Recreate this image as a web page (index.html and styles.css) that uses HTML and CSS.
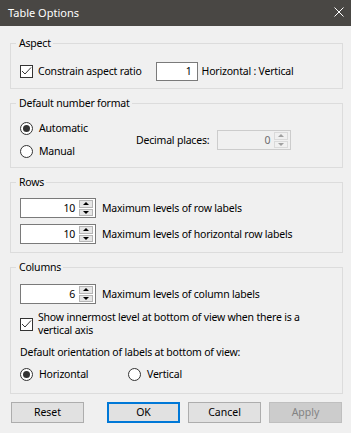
FILE: index.html
```html
<!DOCTYPE html>
<html lang="en">
<head>
    <meta charset="UTF-8">
    <title>Table Options</title>
    <link rel="stylesheet" href="styles.css">
</head>
<body>

<div class="titlebar">
    <span class="title">Table Options</span>
    <svg class="close" width="10" height="10" viewBox="0 0 10 10">
        <path d="M0.5 0.5 L9.5 9.5 M9.5 0.5 L0.5 9.5" stroke="#fff" stroke-width="1" fill="none"/>
    </svg>
</div>

<div class="content">

    <fieldset class="group group-aspect">
        <legend>Aspect</legend>
        <div class="row">
            <span class="check">
                <span class="box"><svg width="11" height="11" viewBox="0 0 11 11"><path d="M1 5 L4 8 L10 1.5" stroke="#333" fill="none"/></svg></span>
                Constrain aspect ratio
            </span>
            <span class="textbox ratio">1</span>
            <span class="after-ratio">Horizontal : Vertical</span>
        </div>
    </fieldset>

    <fieldset class="group group-format">
        <legend>Default number format</legend>
        <div class="format">
            <div class="radios">
                <span class="radio"><span class="dot on"></span>Automatic</span>
                <span class="radio"><span class="dot"></span>Manual</span>
            </div>
            <div class="decimals">
                <span>Decimal places:</span>
                <span class="spin disabled decimal">
                    <span class="spin-value">0</span>
                    <span class="spin-btns"><span class="up"></span><span class="down"></span></span>
                </span>
            </div>
        </div>
    </fieldset>

    <fieldset class="group group-rows">
        <legend>Rows</legend>
        <div class="row">
            <span class="spin">
                <span class="spin-value">10</span>
                <span class="spin-btns"><span class="up"></span><span class="down"></span></span>
            </span>
            <span class="spin-label">Maximum levels of row labels</span>
        </div>
        <div class="row next">
            <span class="spin">
                <span class="spin-value">10</span>
                <span class="spin-btns"><span class="up"></span><span class="down"></span></span>
            </span>
            <span class="spin-label">Maximum levels of horizontal row labels</span>
        </div>
    </fieldset>

    <fieldset class="group group-columns">
        <legend>Columns</legend>
        <div class="row">
            <span class="spin">
                <span class="spin-value">6</span>
                <span class="spin-btns"><span class="up"></span><span class="down"></span></span>
            </span>
            <span class="spin-label">Maximum levels of column labels</span>
        </div>
        <div class="check multi">
            <span class="box"><svg width="11" height="11" viewBox="0 0 11 11"><path d="M1 5 L4 8 L10 1.5" stroke="#333" fill="none"/></svg></span>
            <span>Show innermost level at bottom of view when there is a vertical axis</span>
        </div>
        <div class="orient-label">Default orientation of labels at bottom of view:</div>
        <div class="orient">
            <span class="radio horiz"><span class="dot on"></span>Horizontal</span>
            <span class="radio"><span class="dot"></span>Vertical</span>
        </div>
    </fieldset>

    <div class="buttons">
        <button type="button" class="reset">Reset</button>
        <button type="button" class="default">OK</button>
        <button type="button">Cancel</button>
        <button type="button" disabled>Apply</button>
    </div>

</div>

</body>
</html>
```

FILE: styles.css
```css
* {
    box-sizing: border-box;
}

html, body {
    margin: 0;
}

body {
    width: 351px;
    height: 433px;
    overflow: hidden;
    background: #f0f0f0;
    color: #000;
    font-family: "Noto Sans", "Liberation Sans", sans-serif;
    font-size: 10.5px;
    line-height: 13px;
    letter-spacing: -0.2px;
}

.titlebar {
    height: 26px;
    background: #494744;
    color: #fff;
    display: flex;
    align-items: center;
    justify-content: space-between;
    padding: 0 7px 2px 8px;
    letter-spacing: 0;
}

.title {
    font-size: 11px;
}

.content {
    padding: 11px 8px 0 10px;
}

.group {
    margin: 0 0 8px;
    padding: 0 8px 8px 9px;
    border: 1px solid #dcdcdc;
    min-width: 0;
}

.group legend {
    margin-left: -4px;
    padding: 0 2px 0 3px;
    line-height: 13px;
}

.row {
    display: flex;
    align-items: center;
}

/* checkbox and radio */
.check {
    display: flex;
    align-items: center;
    gap: 5px;
}

.box {
    width: 13px;
    height: 13px;
    border: 1px solid #333;
    background: #fff;
    flex: none;
    display: flex;
}

.radio {
    display: flex;
    align-items: center;
    gap: 6px;
}

.dot {
    width: 13px;
    height: 13px;
    border: 1px solid #333;
    border-radius: 50%;
    background: #fff;
    display: flex;
    align-items: center;
    justify-content: center;
    flex: none;
}

.dot.on::after {
    content: "";
    width: 7px;
    height: 7px;
    border-radius: 50%;
    background: #333;
}

/* text boxes */
.textbox {
    height: 19px;
    border: 1px solid #7a7a7a;
    background: #fff;
    text-align: right;
    padding-right: 5px;
    line-height: 17px;
}

.ratio {
    width: 42px;
    margin-left: 14px;
}

.after-ratio {
    margin-left: 4px;
}

.spin {
    width: 76px;
    height: 20px;
    border: 1px solid #7a7a7a;
    background: #fff;
    display: flex;
    padding: 1px 2px 1px 1px;
    flex: none;
}

.spin-value {
    flex: 1;
    text-align: right;
    padding-right: 4px;
    line-height: 16px;
}

.spin-btns {
    width: 14px;
    display: flex;
    flex-direction: column;
    gap: 1px;
}

.spin-btns span {
    flex: 1;
    background: #e6e6e6;
    border: 1px solid #b5b5b5;
    display: flex;
    align-items: center;
    justify-content: center;
}

.spin-btns .up::after {
    content: "";
    border-left: 3px solid transparent;
    border-right: 3px solid transparent;
    border-bottom: 3px solid #000;
}

.spin-btns .down::after {
    content: "";
    border-left: 3px solid transparent;
    border-right: 3px solid transparent;
    border-top: 3px solid #000;
}

.spin.disabled {
    background: #f0f0f0;
    border-color: #cccccc;
    color: #6d6d6d;
}

.spin.disabled .spin-btns span {
    background: #f0f0f0;
    border-color: #dadada;
}

.spin.disabled .up::after {
    border-bottom-color: #a0a0a0;
}

.spin.disabled .down::after {
    border-top-color: #a0a0a0;
}

.spin-label {
    margin-left: 6px;
}

/* groups */
.group-aspect {
    padding-top: 12px;
    padding-bottom: 7px;
}

.group-format {
    padding-top: 12px;
    padding-bottom: 9px;
}

.format {
    display: flex;
    align-items: center;
}

.radios {
    width: 116px;
    display: flex;
    flex-direction: column;
    gap: 10px;
}

.decimals {
    display: flex;
    align-items: center;
    gap: 8px;
}

.decimal {
    width: 74px;
}

.group-rows {
    padding-top: 9px;
}

.row.next {
    margin-top: 6px;
}

.group-columns {
    padding-top: 10px;
    padding-bottom: 12px;
}

.check.multi {
    margin-top: 7px;
}

.orient-label {
    margin-top: 9px;
}

.orient {
    display: flex;
    margin-top: 9px;
}

.orient .horiz {
    width: 108px;
}

/* buttons */
.buttons {
    display: flex;
    gap: 8px;
    margin: 1px 0 0 1px;
}

button {
    width: 73px;
    height: 21px;
    margin: 0;
    padding: 0;
    font: inherit;
    color: #000;
    background: #e1e1e1;
    border: 1px solid #adadad;
}

button.reset {
    margin-right: 15px;
}

button.default {
    border: 2px solid #0078d7;
}

button:disabled {
    background: #cccccc;
    border-color: #bfbfbf;
    color: #838383;
}
```
